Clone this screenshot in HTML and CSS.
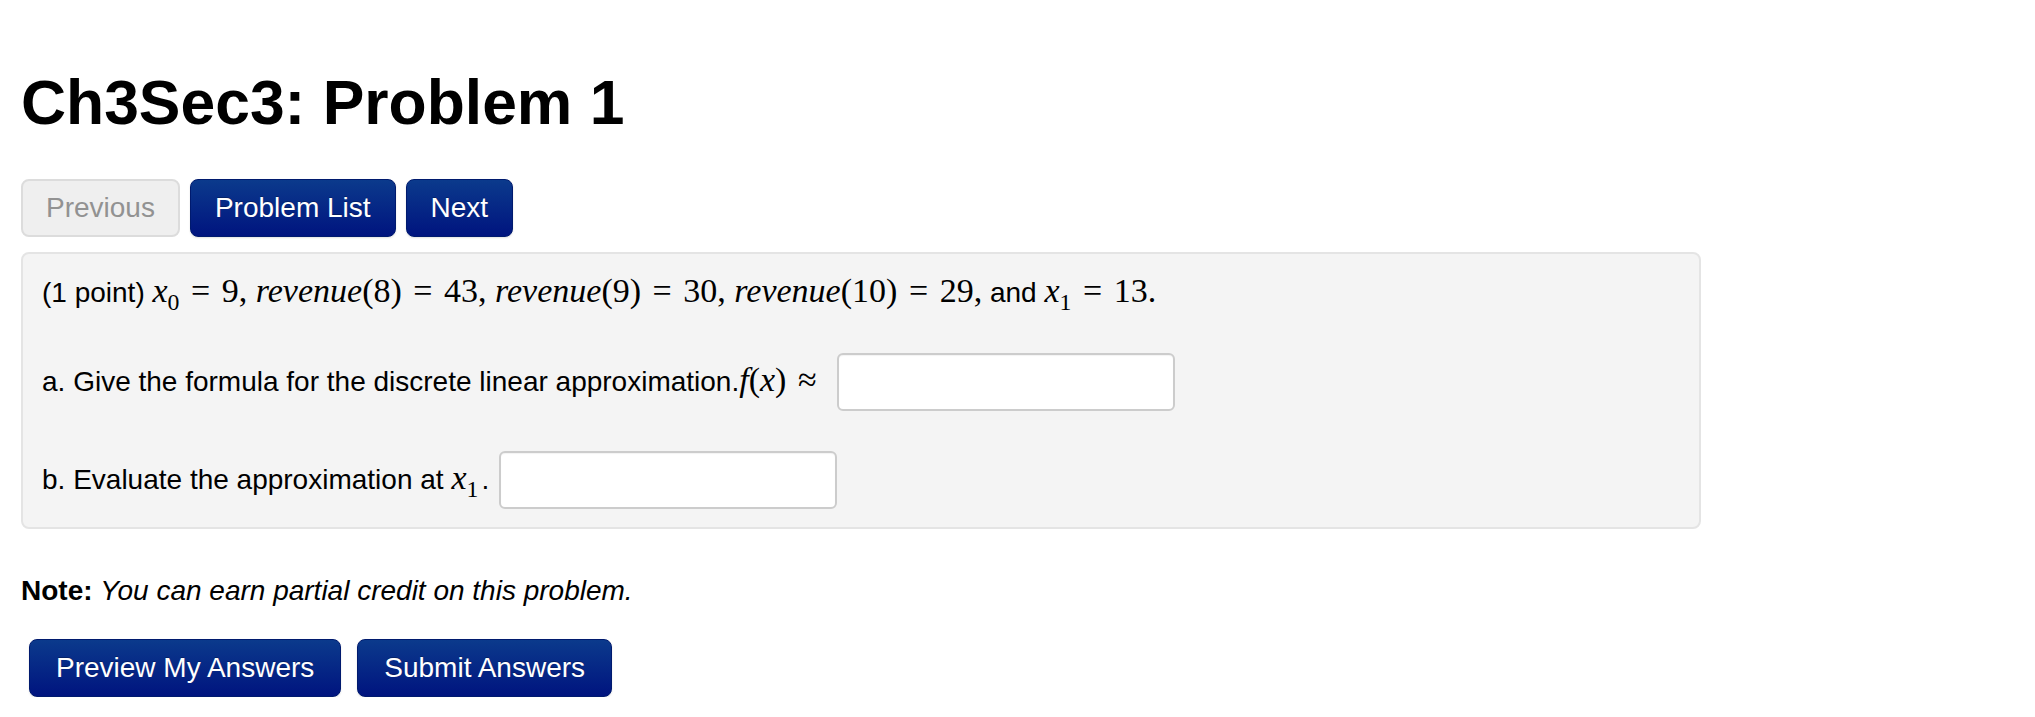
FILE: index.html
```html
<!DOCTYPE html>
<html lang="en">
<head>
<meta charset="utf-8">
<title>Ch3Sec3: Problem 1</title>
<link rel="stylesheet" href="styles.css">
</head>
<body>
<div class="page">
  <h1 class="title">Ch3Sec3: Problem 1</h1>
  <div class="nav">
    <span class="btn btn-disabled">Previous</span>
    <span class="btn btn-primary">Problem List</span>
    <span class="btn btn-primary">Next</span>
  </div>
  <div class="problem">
    <div class="line">(1 point) <span class="m"><i>x</i><sub>0</sub><span class="op">=</span>9, <i>revenue</i>(8)<span class="op">=</span>43, <i>revenue</i>(9)<span class="op">=</span>30, <i>revenue</i>(10)<span class="op">=</span>29,</span> and <span class="m"><i>x</i><sub>1</sub><span class="op">=</span>13.</span></div>
    <div class="line input-row">
      <span class="label">a. Give the formula for the discrete linear approximation.<span class="m"><i>f</i>(<i>x</i>)<span class="op op-end">≈</span></span></span>
      <input class="answer" type="text">
    </div>
    <div class="line input-row">
      <span class="label">b. Evaluate the approximation at <span class="m"><i>x</i><sub>1</sub></span><span class="dot">.</span></span>
      <input class="answer answer-b" type="text">
    </div>
  </div>
  <p class="note"><b>Note:</b> <i>You can earn partial credit on this problem.</i></p>
  <div class="actions">
    <span class="btn btn-primary btn-submit">Preview My Answers</span>
    <span class="btn btn-primary btn-submit">Submit Answers</span>
  </div>
</div>
</body>
</html>
```
FILE: styles.css
```css
html, body {
  margin: 0;
  padding: 0;
  background: #ffffff;
}
body {
  font-family: "Liberation Sans", Arial, Helvetica, sans-serif;
  font-size: 28px;
  line-height: 40px;
  color: #000;
}
.page {
  padding: 0 21px;
}
.title {
  margin: 68px 0 41px;
  font-size: 62.4px;
  line-height: 70px;
  font-weight: bold;
  color: #000;
}
.nav {
  display: flex;
  gap: 10px;
}
.btn {
  display: inline-block;
  padding: 8px 24px;
  line-height: 40px;
  font-size: 28px;
  border-radius: 8px;
  border: 1px solid transparent;
  white-space: nowrap;
}
.btn-primary {
  color: #fff;
  background: linear-gradient(to bottom, #0b3a8c, #00147f);
  border-color: #001a6e;
  text-shadow: 0 -1px 0 rgba(0,0,0,0.25);
  box-shadow: 0 1px 2px rgba(0,0,0,0.12);
}
.btn-submit {
  padding: 8px 26px;
}
.btn-disabled {
  color: #929292;
  background: #efefef;
  border: 2px solid #dcdcdc;
  padding: 7px 23px;
}
.problem {
  box-sizing: border-box;
  width: 1680px;
  margin-top: 15px;
  padding: 19px 19px 18px;
  background: #f4f4f4;
  border: 2px solid #e4e4e4;
  border-radius: 8px;
  display: flex;
  flex-direction: column;
  gap: 40px;
}
.line {
  height: 40px;
  line-height: 40px;
  white-space: nowrap;
}
.input-row {
  height: auto;
  display: flex;
  align-items: center;
}
.m {
  font-family: "Liberation Serif", "Times New Roman", serif;
  font-size: 34px;
  line-height: 1;
}
.m i {
  font-style: italic;
}
.m sub {
  font-size: 0.7em;
  vertical-align: -0.32em;
  line-height: 0;
}
.op {
  margin: 0 0.34em;
}
.op-end {
  margin-right: 0.2em;
}
.dot {
  margin-left: 3px;
}
.answer {
  box-sizing: border-box;
  width: 338px;
  height: 58px;
  margin-left: 14px;
  background: #fff;
  border: 2px solid #cccccc;
  border-radius: 6px;
  box-shadow: inset 0 1px 1px rgba(0,0,0,0.05);
  font-size: 28px;
}
.answer-b {
  margin-left: 10px;
}
.note {
  margin: 42px 0 28px;
  line-height: 40px;
}
.actions {
  display: flex;
  gap: 16px;
  margin-left: 8px;
}
```
